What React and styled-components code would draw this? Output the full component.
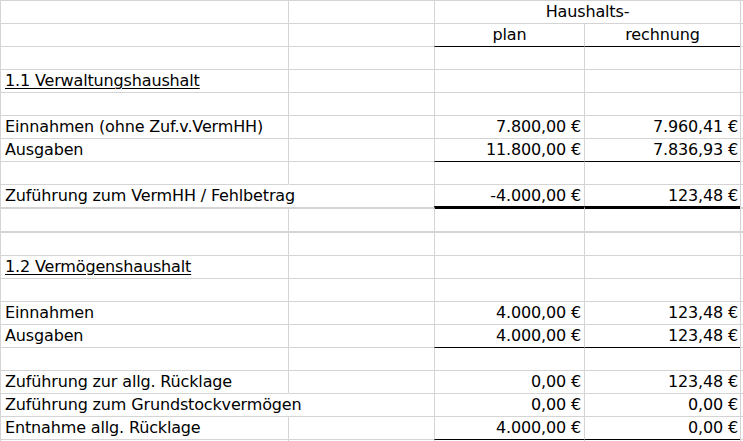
import React from "react";
import styled, { createGlobalStyle, css } from "styled-components";

const Global = createGlobalStyle`
  html, body { margin: 0; padding: 0; background: #fff; }
  body { width: 743px; height: 441px; overflow: hidden; }
`;

const GRID = "#d4d4d4";

const Sheet = styled.div`
  width: 743px;
  height: 441px;
  overflow: hidden;
  display: flex;
  flex-direction: column;
  font-family: "DejaVu Sans", sans-serif;
  font-size: 16px;
  letter-spacing: -0.15px;
  color: #000;
`;

const Row = styled.div`
  display: grid;
  grid-template-columns: 288px 146px 150px 156px 3px;
  height: ${(p) => p.$h || 23}px;
  flex: none;
`;

const topBorder = {
  grid: css`border-top: 1px solid ${GRID};`,
  gray2: css`border-top: 2px solid ${GRID};`,
  black: css`border-top: 1px solid #000;`,
  thick: css`border-top: 3px solid #000; margin-top: -1px;`,
};

const Cell = styled.div`
  box-sizing: border-box;
  border-left: 1px solid ${(p) => (p.$noLeft ? "transparent" : GRID)};
  ${(p) => topBorder[p.$top || "grid"]}
  grid-column: ${(p) => (p.$span ? `span ${p.$span}` : "auto")};
  display: flex;
  align-items: flex-end;
  justify-content: ${(p) =>
    p.$align === "right" ? "flex-end" : p.$align === "center" ? "center" : "flex-start"};
  padding: 0 ${(p) => (p.$align === "right" ? p.$pr ?? 3 : 0)}px 2px
    ${(p) => (p.$align === "right" || p.$align === "center" ? 0 : 4)}px;
  line-height: 18px;
  white-space: nowrap;
  overflow: visible;
  min-width: 0;
  position: relative;
  z-index: ${(p) => (p.$front ? 1 : 0)};
`;

const Heading = styled.span`
  text-decoration: underline;
  text-underline-offset: 2px;
  text-decoration-thickness: 1px;
`;

const rows = [
  { label: "", merged: "Haushalts-" },
  { label: "", c: "plan", d: "rechnung", center: true },
  { label: "", cd: "black" },
  { label: <Heading>1.1 Verwaltungshaushalt</Heading> },
  { label: "" },
  { label: "Einnahmen (ohne Zuf.v.VermHH)", c: "7.800,00 €", d: "7.960,41 €" },
  { label: "Ausgaben", c: "11.800,00 €", d: "7.836,93 €" },
  { label: "", cd: "black" },
  { label: "Zuführung zum VermHH / Fehlbetrag", c: "-4.000,00 €", d: "123,48 €", spill: true },
  { label: "", top: "gray2", cd: "thick", h: 24 },
  { label: "", top: "gray2", h: 24 },
  { label: <Heading>1.2 Vermögenshaushalt</Heading> },
  { label: "" },
  { label: "Einnahmen", c: "4.000,00 €", d: "123,48 €" },
  { label: "Ausgaben", c: "4.000,00 €", d: "123,48 €" },
  { label: "", cd: "black" },
  { label: "Zuführung zur allg. Rücklage", c: "0,00 €", d: "123,48 €" },
  { label: "Zuführung zum Grundstockvermögen", c: "0,00 €", d: "0,00 €", spill: true },
  { label: "Entnahme allg. Rücklage", c: "4.000,00 €", d: "0,00 €" },
  { label: "", cd: "black" },
];

export default function App() {
  return (
    <>
      <Global />
      <Sheet>
        {rows.map((r, i) => {
          const top = r.top || "grid";
          const cdTop = r.cd || top;
          return (
            <Row key={i} $h={r.h}>
              <Cell $top={top} $front={r.spill}>{r.label}</Cell>
              <Cell $top={top} $noLeft={r.spill} />
              {r.merged !== undefined ? (
                <Cell $top={top} $span={2} $align="center">
                  {r.merged}
                </Cell>
              ) : (
                <>
                  <Cell $top={cdTop} $align={r.center ? "center" : "right"}>
                    {r.c}
                  </Cell>
                  <Cell $top={cdTop} $align={r.center ? "center" : "right"} $pr={2}>
                    {r.d}
                  </Cell>
                </>
              )}
              <Cell $top={top} />
            </Row>
          );
        })}
      </Sheet>
    </>
  );
}
